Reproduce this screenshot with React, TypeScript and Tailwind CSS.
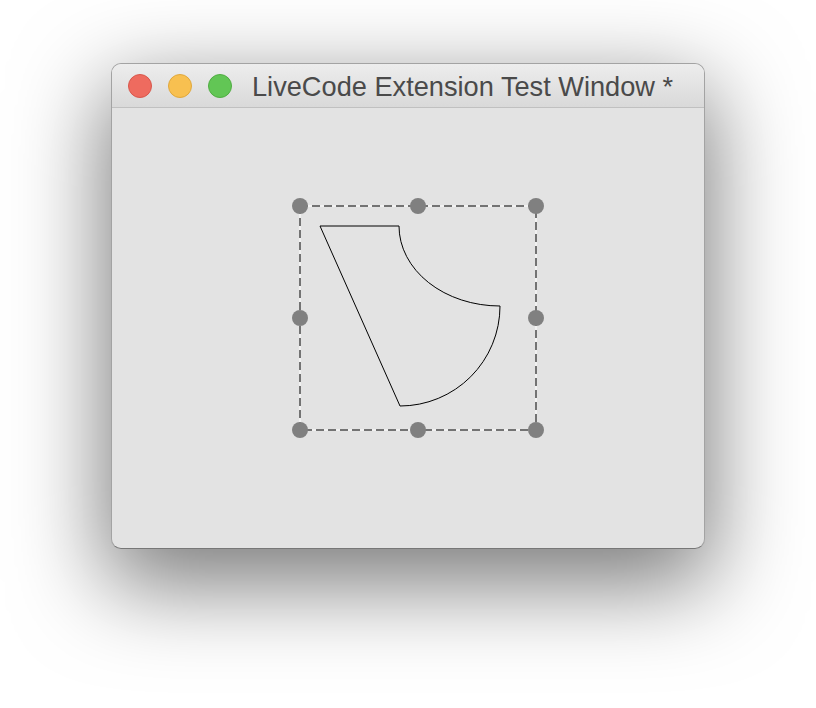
import React from 'react';

const handles: [number, number][] = [
    [188, 98], [306, 98], [424, 98],
    [188, 210], [424, 210],
    [188, 322], [306, 322], [424, 322],
];

export default function App() {
    return (
        <div className="min-h-[708px] w-full bg-white flex justify-center pt-[63px] font-['Liberation_Sans',Arial,sans-serif]">
            <div className="w-[594px] h-[486px] rounded-[10px] border border-[#a3a3a3] border-b-[#777777] bg-[#e3e3e3] overflow-hidden flex flex-col shadow-[0_30px_90px_6px_rgba(0,0,0,0.52)]">
                {/* title bar */}
                <div className="h-[44px] shrink-0 flex items-center pl-4 border-b border-[#c0c0c0] bg-gradient-to-b from-[#ededed] to-[#d9d9d9]">
                    <div className="w-6 h-6 rounded-full bg-[#ee6b5f] border border-[#d8574c]" />
                    <div className="w-6 h-6 rounded-full bg-[#f8c050] border border-[#e0a83c] ml-4" />
                    <div className="w-6 h-6 rounded-full bg-[#62c655] border border-[#50ad42] ml-4" />
                    <span className="ml-5 pt-[3px] text-[27.2px] leading-none text-[#4a4a4a]">LiveCode Extension Test Window *</span>
                </div>

                {/* canvas */}
                <svg width="592" height="440" viewBox="0 0 592 440" className="block">
                    <rect x="188" y="98" width="236" height="224" fill="none" stroke="#f2f2f2" strokeWidth="2" />
                    <rect x="188" y="98" width="236" height="224" fill="none" stroke="#737373" strokeWidth="2" strokeDasharray="8 4" />
                    <path d="M208 118 L287 118 A101 80 0 0 0 388 198 A100 100 0 0 1 288 298 Z" fill="none" stroke="#000" strokeWidth="1" />
                    {handles.map(([x, y], i) => (
                        <circle key={i} cx={x} cy={y} r="8" fill="#808080" />
                    ))}
                </svg>
            </div>
        </div>
    );
}
